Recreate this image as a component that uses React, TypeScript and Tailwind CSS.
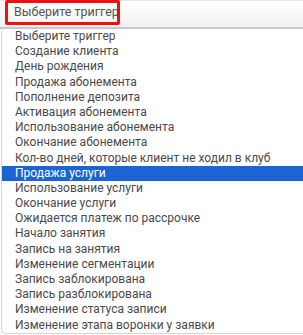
import React from "react";

const items = [
  "Выберите триггер",
  "Создание клиента",
  "День рождения",
  "Продажа абонемента",
  "Пополнение депозита",
  "Активация абонемента",
  "Использование абонемента",
  "Окончание абонемента",
  "Кол-во дней, которые клиент не ходил в клуб",
  "Продажа услуги",
  "Использование услуги",
  "Окончание услуги",
  "Ожидается платеж по рассрочке",
  "Начало занятия",
  "Запись на занятия",
  "Изменение сегментации",
  "Запись заблокирована",
  "Запись разблокирована",
  "Изменение статуса записи",
  "Изменение этапа воронки у заявки",
];

export default function App() {
  return (
    <div
      className="w-[303px] h-[335px] overflow-hidden bg-white"
      style={{ fontFamily: "Roboto, 'Liberation Sans', sans-serif" }}
    >
      <div className="h-[29px] border-t border-[#e6e6e6] border-b-2 border-b-[#c8c8cc] bg-gradient-to-b from-white to-[#f1f1f3] flex items-start pl-[5px]">
        <div className="h-[25px] -mt-px w-[115px] border-[3px] border-[#ee1111] rounded-[2px] flex items-center pl-[6px] text-[12.5px] text-[#555] whitespace-nowrap">
          Выберите триггер
        </div>
      </div>
      <div className="ml-px border-l border-b border-[#d6d6d6] rounded-bl-[5px] rounded-tl-[5px] flex flex-col">
        {items.map((t, i) => (
          <div
            key={i}
            className={
              i === 9
                ? "h-[15.2px] leading-[15.2px] pl-[13px] text-[12px] text-white bg-[#1c64d4] whitespace-nowrap"
                : "h-[15.2px] leading-[15.2px] pl-[13px] text-[12px] text-[#4a4a4a] whitespace-nowrap"
            }
          >
            {t}
          </div>
        ))}
      </div>
    </div>
  );
}
